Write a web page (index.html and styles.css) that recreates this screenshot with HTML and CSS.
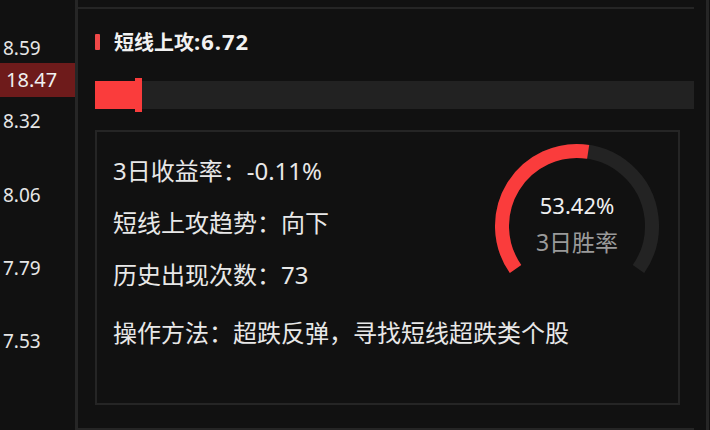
FILE: index.html
```html
<!DOCTYPE html>
<html lang="zh-CN">
<head>
    <meta charset="UTF-8">
    <meta name="viewport" content="width=device-width, initial-scale=1.0">
    <title>短线上攻</title>
    <link rel="stylesheet" href="styles.css">
</head>
<body>
    <div class="axis">
        <div class="axis-row">8.59</div>
        <div class="axis-row">8.32</div>
        <div class="axis-row">8.06</div>
        <div class="axis-row">7.79</div>
        <div class="axis-row">7.53</div>
        <div class="axis-current">18.47</div>
    </div>

    <div class="panel">
        <div class="panel-head">
            <span class="head-mark"></span>
            <span class="head-title">短线上攻<span class="head-value">:6.72</span></span>
        </div>

        <div class="score-bar">
            <div class="score-fill"></div>
            <div class="score-knob"></div>
            <div class="score-rest"></div>
        </div>

        <div class="detail">
            <div class="detail-top">
                <div class="stats">
                    <div class="stat">3日收益率：-0.11%</div>
                    <div class="stat">短线上攻趋势：向下</div>
                    <div class="stat">历史出现次数：73</div>
                </div>
                <svg class="gauge" width="166" height="166" viewBox="0 0 166 166">
                    <!-- 250deg gauge, 215 -> -35 -->
                    <path d="M21.56 126.02 A75 75 0 1 1 144.44 126.02" fill="none" stroke="#232323" stroke-width="14"/>
                    <path d="M21.56 126.02 A75 75 0 0 1 94.15 8.83" fill="none" stroke="#fa3c3c" stroke-width="14"/>
                    <text class="gauge-value" x="83" y="62" text-anchor="middle" dominant-baseline="central">53.42%</text>
                    <text class="gauge-label" x="83" y="99" text-anchor="middle" dominant-baseline="central">3日胜率</text>
                </svg>
            </div>
            <div class="method">操作方法：超跌反弹，寻找短线超跌类个股</div>
        </div>
    </div>

    <div class="side"></div>
</body>
</html>
```

FILE: styles.css
```css
body, html {
    margin: 0;
    padding: 0;
    width: 100%;
    height: 100%;
    background-color: #111;
    overflow: hidden;
}
body {
    display: flex;
    font-family: "Noto Sans", "Noto Sans CJK SC", sans-serif;
    color: #e8e8e8;
}

/* price axis on the left */
.axis {
    position: relative;
    width: 75px;
    flex-shrink: 0;
    border-right: 3px solid #262626;
    padding-top: 12px;
    box-sizing: content-box;
}
.axis-row {
    height: 73.3px;
    line-height: 73.3px;
    padding-left: 3px;
    font-size: 19px;
    color: #e6e6e6;
}
.axis-current {
    position: absolute;
    left: 0;
    top: 63px;
    width: 75px;
    height: 34px;
    line-height: 34px;
    padding-left: 6px;
    box-sizing: border-box;
    background: #6e1b1b;
    font-size: 20px;
    color: #f0f0f0;
}

/* main card */
.panel {
    width: 616px;
    flex-shrink: 0;
    margin-top: 7px;
    height: 423px;
    box-sizing: border-box;
    border-top: 2px solid #252525;
    border-bottom: 2px solid #252525;
    padding-left: 17px;
}
.panel-head {
    display: flex;
    align-items: center;
    height: 26px;
    margin-top: 20px;
}
.head-mark {
    width: 5px;
    height: 16px;
    background: #f04848;
    border-radius: 1px;
    margin-right: 14px;
}
.head-title {
    font-size: 20px;
    font-weight: bold;
    color: #f2f2f2;
    line-height: 26px;
}
.head-value {
    font-size: 22px;
    letter-spacing: 1px;
}

.score-bar {
    display: flex;
    align-items: center;
    height: 34px;
    margin-top: 23px;
}
.score-fill {
    width: 40px;
    height: 28px;
    background: #fa3c3c;
}
.score-knob {
    width: 7px;
    height: 34px;
    background: #fa3c3c;
}
.score-rest {
    flex: 1;
    height: 28px;
    background: #222;
}

.detail {
    margin-top: 18px;
    margin-right: 14px;
    height: 275px;
    box-sizing: border-box;
    border: 2px solid #252525;
    padding: 13px 18px 0 16px;
}
.detail-top {
    display: flex;
    height: 156px;
}
.stats {
    flex: 1;
}
.stat, .method {
    font-size: 24px;
    line-height: 52px;
    height: 52px;
    white-space: nowrap;
}
.gauge {
    flex-shrink: 0;
    margin-top: -2.5px;
}
.gauge-value {
    font-family: "Noto Sans", "Noto Sans CJK SC", sans-serif;
    font-size: 22px;
    fill: #f0f0f0;
}
.gauge-label {
    font-family: "Noto Sans", "Noto Sans CJK SC", sans-serif;
    font-size: 23px;
    fill: #9a9a9a;
}
.method {
    margin-top: 5.5px;
}

.side {
    margin-left: 12px;
    border-left: 3px solid #262626;
    flex: 1;
}
```
